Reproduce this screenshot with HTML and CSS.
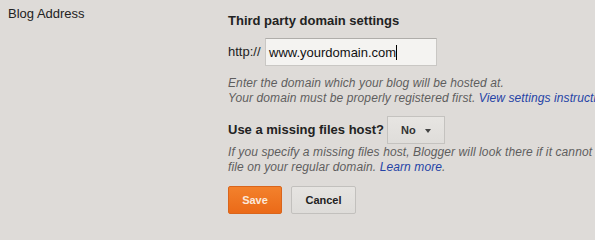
FILE: index.html
```html
<!DOCTYPE html>
<html>
<head>
<meta charset="utf-8">
<link rel="stylesheet" href="styles.css">
</head>
<body>
<div class="page">
  <div class="label">Blog Address</div>
  <div class="panel">
    <div class="heading">Third party domain settings</div>
    <div class="url-row">
      <span class="prefix">http://</span>
      <div class="field"><span class="field-text">www.yourdomain.com</span><span class="caret"></span></div>
    </div>
    <div class="help help-first">Enter the domain which your blog will be hosted at.<br>Your domain must be properly registered first. <a class="link" href="#">View settings instructions</a></div>
    <div class="host-row">
      <span class="heading">Use a missing files host?</span>
      <div class="select"><span class="select-text">No</span><span class="arrow"></span></div>
    </div>
    <div class="help help-second">If you specify a missing files host, Blogger will look there if it cannot find a<br>file on your regular domain. <a class="link" href="#">Learn more</a>.</div>
    <div class="actions">
      <button class="btn btn-save">Save</button>
      <button class="btn btn-cancel">Cancel</button>
    </div>
  </div>
</div>
</body>
</html>
```

FILE: styles.css
```css
html, body {
  margin: 0;
  padding: 0;
}
body {
  background: #dedbd8;
  font-family: "Liberation Sans", Arial, sans-serif;
  color: #222;
  width: 595px;
  height: 222px;
  overflow: hidden;
}
.page {
  display: flex;
  padding: 6px 0 0 8px;
  white-space: nowrap;
}
.label {
  width: 220px;
  flex: none;
  font-size: 13px;
  line-height: 16px;
  color: #222;
}
.panel {
  display: flex;
  flex-direction: column;
  align-items: flex-start;
  margin-top: 7px;
}
.heading {
  font-size: 13px;
  font-weight: bold;
  line-height: 16px;
  color: #222;
}
.url-row {
  display: flex;
  align-items: center;
  margin-top: 9px;
}
.prefix {
  font-size: 13px;
  line-height: 16px;
  color: #222;
  width: 37px;
}
.field {
  box-sizing: border-box;
  width: 172px;
  height: 28px;
  background: #f4f3f1;
  border: 1px solid #c9c7c4;
  border-top-color: #afadaa;
  display: flex;
  align-items: center;
  padding-left: 3px;
  font-size: 13px;
  color: #111;
}
.caret {
  display: inline-block;
  width: 1px;
  height: 15px;
  background: #000;
}
.help {
  font-size: 12px;
  line-height: 15px;
  font-style: italic;
  letter-spacing: 0.1px;
  color: #5e5e5e;
}
.help-first {
  margin-top: 10px;
}
.link {
  color: #2543a6;
  text-decoration: none;
}
.host-row {
  display: flex;
  align-items: center;
  margin-top: 10px;
}
.select {
  box-sizing: border-box;
  width: 58px;
  height: 28px;
  margin-left: 3px;
  border: 1px solid #c4c2bf;
  background: linear-gradient(#e7e5e2, #dfddda);
  display: flex;
  align-items: center;
  padding-left: 13px;
}
.select-text {
  font-size: 11px;
  font-weight: bold;
  color: #333;
}
.arrow {
  width: 0;
  height: 0;
  border-left: 3.5px solid transparent;
  border-right: 3.5px solid transparent;
  border-top: 4px solid #444;
  margin-left: 9px;
  margin-top: 2px;
}
.help-second {
  margin-top: 1px;
}
.actions {
  display: flex;
  gap: 9px;
  margin-top: 11px;
}
.btn {
  box-sizing: border-box;
  height: 28px;
  font-family: "Liberation Sans", Arial, sans-serif;
  font-size: 11px;
  font-weight: bold;
  padding: 0;
  border-radius: 2px;
}
.btn-save {
  width: 54px;
  color: #fbe9dc;
  background: linear-gradient(#f3812c, #eb6a18);
  border: 1px solid #d9651c;
}
.btn-cancel {
  width: 65px;
  color: #222;
  background: linear-gradient(#e6e4e1, #dedcd9);
  border: 1px solid #c2c0bd;
}
```
